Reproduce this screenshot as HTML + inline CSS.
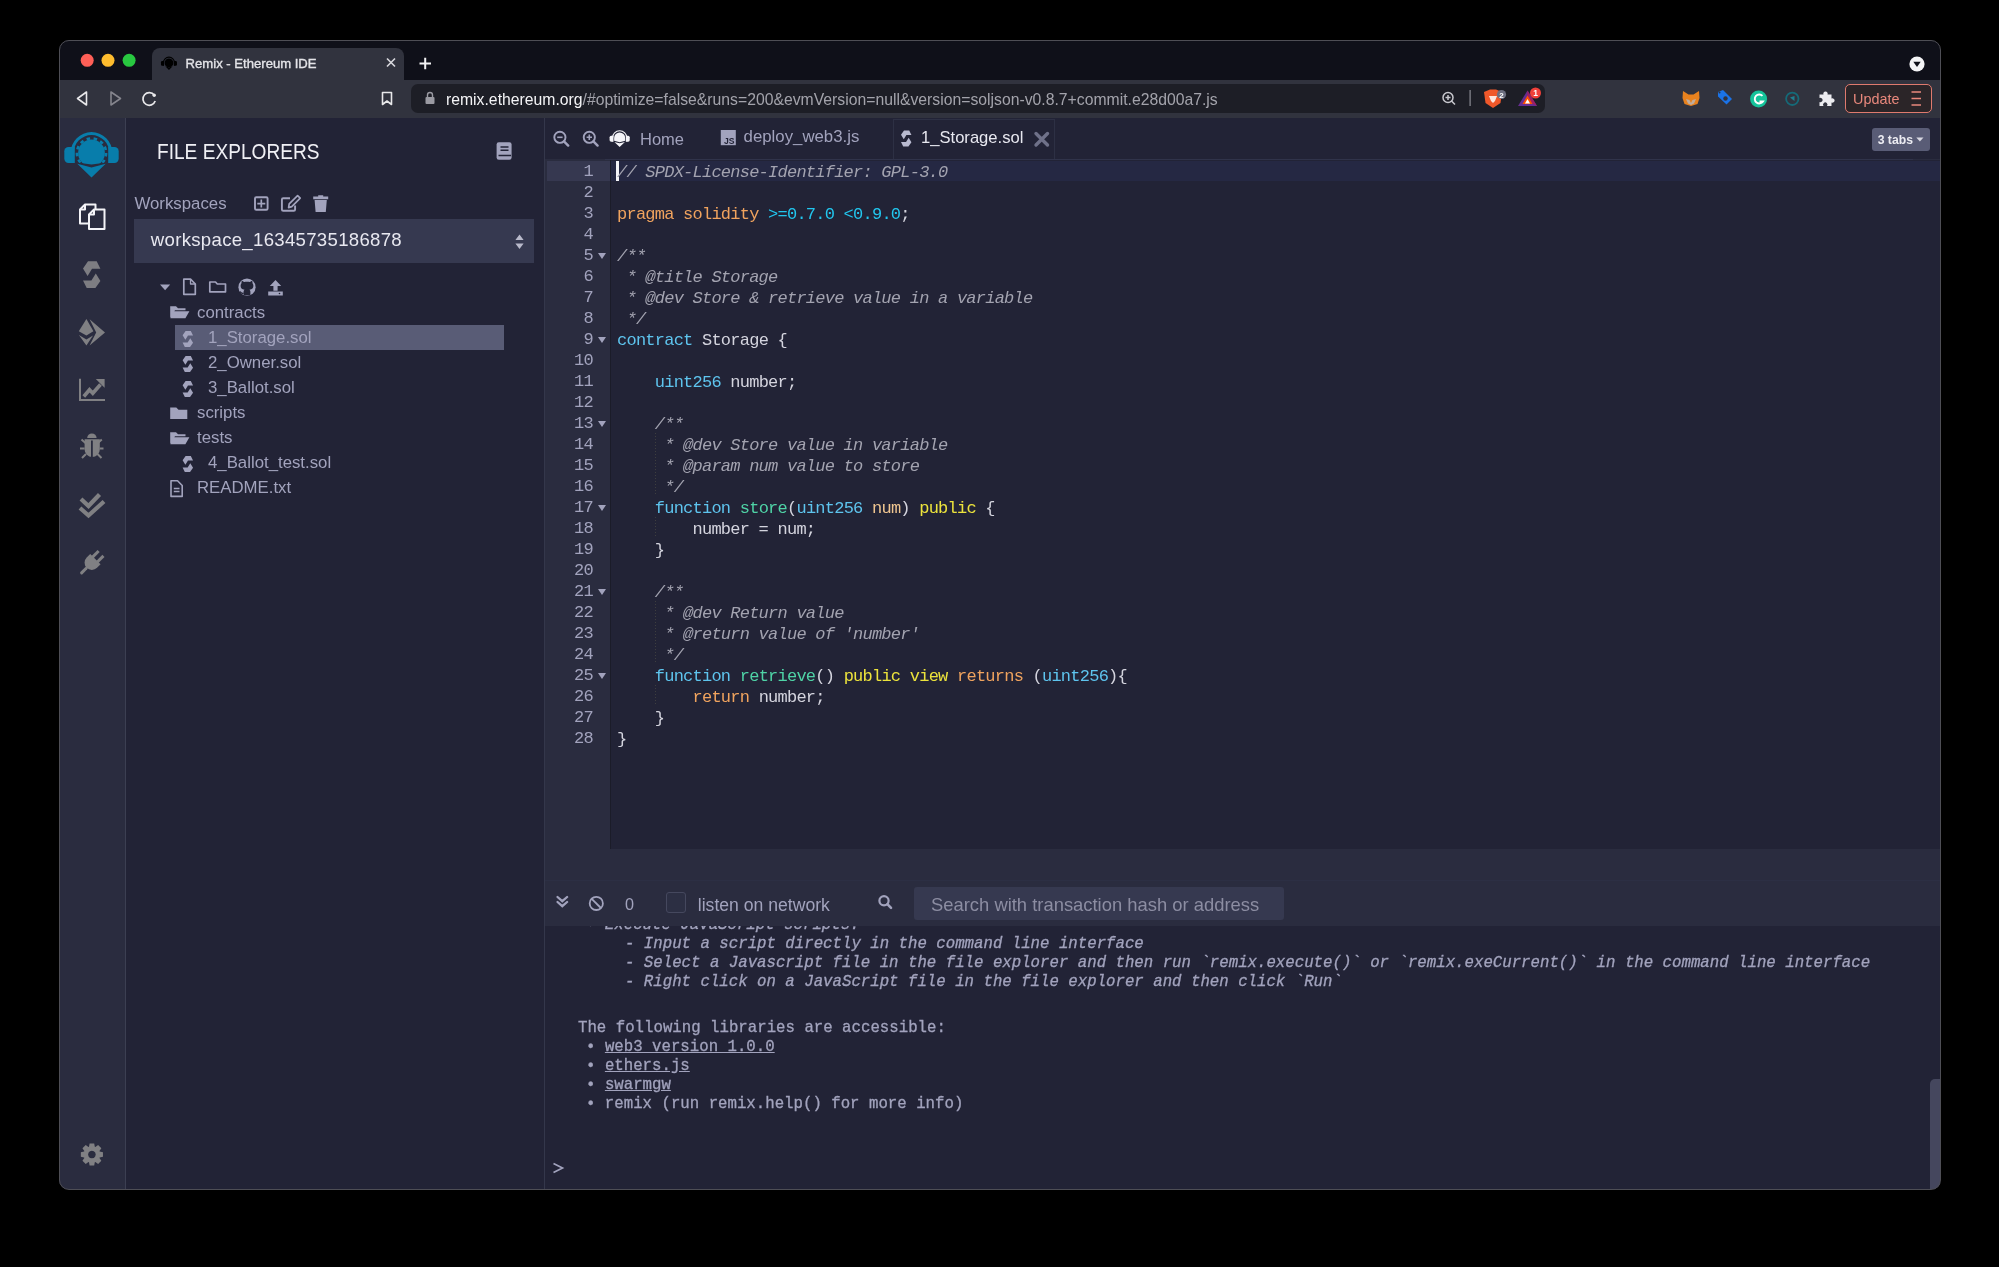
<!DOCTYPE html>
<html><head><meta charset="utf-8">
<style>
html,body{margin:0;padding:0;background:#000;width:1999px;height:1267px;overflow:hidden;}
*{box-sizing:border-box;}
body{font-family:"Liberation Sans",sans-serif;position:relative;}
.a{position:absolute;white-space:pre;}
#win{position:absolute;left:59px;top:40px;width:1882px;height:1150px;border-radius:10px;overflow:hidden;background:#222336;}
#winb{position:absolute;left:59px;top:40px;width:1882px;height:1150px;border-radius:10px;border:1px solid #4e4e55;}
.bk{position:absolute;}
.code{position:absolute;left:617px;white-space:pre;font-family:"Liberation Mono",monospace;font-size:17px;letter-spacing:-0.76px;line-height:21px;height:21px;color:#d4d4de;}
.ln{position:absolute;left:545px;width:48px;text-align:right;font-family:"Liberation Mono",monospace;font-size:17px;letter-spacing:-0.76px;line-height:21px;color:#a2a3bd;}
.fold{position:absolute;left:598px;width:0;height:0;border-left:4px solid transparent;border-right:4px solid transparent;border-top:6px solid #a2a3bd;}
.cm{color:#a3a3b0;font-style:italic;}
.kb{color:#5ec4ee;}
.ko{color:#f0a35e;}
.kc{color:#22c6ee;}
.kg{color:#4fd3a6;}
.ky{color:#ece33c;}
.kp{color:#efc590;}
.tree{position:absolute;font-size:16.6px;color:#a2a3bd;white-space:pre;line-height:20px;}
.term{position:absolute;left:0;white-space:pre;font-family:"Liberation Mono",monospace;font-size:15.73px;line-height:19px;height:19px;color:#a2a3bd;-webkit-text-stroke:0.3px #a2a3bd;margin-top:-0.8px;}
.ti{font-style:italic;}
.u{text-decoration:underline;}
svg{position:absolute;left:0;top:0;}
#app{will-change:transform;}
</style></head><body>
<div id="app" style="position:absolute;left:0;top:0;width:1999px;height:1267px;clip-path:inset(40px 58px 77px 59px round 10px);">
<div class="bk" style="left:59px;top:40px;width:1881px;height:40px;background:#0f1019"></div>
<div class="bk" style="left:152px;top:48px;width:252px;height:32px;background:#31333e;border-radius:8px 8px 0 0"></div>
<div class="bk" style="left:59px;top:80px;width:1881px;height:38px;background:#31333e"></div>
<div class="bk" style="left:411px;top:84px;width:1134px;height:29px;background:#1d1e26;border-radius:7px"></div>
<div class="bk" style="left:1845px;top:84px;width:87px;height:29px;border:1.5px solid #df7a6e;border-radius:5px;background:#2b2528"></div>
<div class="bk" style="left:59px;top:118px;width:66px;height:1071px;background:#2a2c3f"></div>
<div class="bk" style="left:125px;top:118px;width:1px;height:1071px;background:#3c3f52"></div>
<div class="bk" style="left:126px;top:118px;width:418px;height:1071px;background:#222336"></div>
<div class="bk" style="left:544px;top:118px;width:1px;height:1071px;background:#34374b"></div>
<div class="bk" style="left:545px;top:118px;width:1395px;height:1071px;background:#2a2c3f"></div>
<div class="bk" style="left:545px;top:118px;width:1395px;height:41px;background:#222336"></div>
<div class="bk" style="left:893px;top:119px;width:162px;height:41px;border:1px solid #2d3044;border-bottom:none"></div>
<div class="bk" style="left:610px;top:160px;width:1330px;height:689px;background:#222336;border-left:1px solid #1b1c29"></div>
<div class="bk" style="left:605px;top:159px;width:1308px;height:1px;background:#30334a"></div>
<div class="bk" style="left:547px;top:161px;width:63px;height:20px;background:#363850"></div>
<div class="bk" style="left:611px;top:161px;width:1329px;height:20px;background:#252843"></div>
<div class="bk" style="left:616px;top:161px;width:3px;height:20px;background:#f4f4f8"></div>
<div class="bk" style="left:545px;top:880px;width:1395px;height:1px;background:#2c2f44"></div>
<div class="bk" style="left:545px;top:926px;width:1395px;height:263px;background:#222336"></div>
<div class="bk" style="left:1930px;top:1079px;width:10px;height:110px;background:#45475e;border-radius:5px 0 0 0"></div>
<div class="bk" style="left:134px;top:219px;width:400px;height:44px;background:#363950"></div>
<div class="bk" style="left:175px;top:325px;width:329px;height:25px;background:#595c76"></div>
<div class="bk" style="left:914px;top:887px;width:370px;height:33px;background:#363950;border-radius:3px"></div>
<div class="bk" style="left:666px;top:892px;width:20px;height:21px;border:1px solid #45485e;border-radius:3px;background:#2c2f43"></div>
<div class="bk" style="left:1872px;top:128px;width:58px;height:23px;background:#595c76;border-radius:3px"></div>
<div class="a" style="left:185.6px;top:56.26px;font-family:'Liberation Sans',sans-serif;font-size:13.1px;line-height:16px;color:#e4e4e8;font-weight:normal;-webkit-text-stroke:0.35px #e4e4e8;">Remix - Ethereum IDE</div>
<div class="a" style="left:446px;top:89.54px;font-family:'Liberation Sans',sans-serif;font-size:15.76px;line-height:19px;color:#a3a3ab;font-weight:normal;"><span style="color:#f4f4f6">remix.ethereum.org</span>/#optimize=false&amp;runs=200&amp;evmVersion=null&amp;version=soljson-v0.8.7+commit.e28d00a7.js</div>
<div class="a" style="left:1853px;top:90.81px;font-family:'Liberation Sans',sans-serif;font-size:14.4px;line-height:17px;color:#e9887c;font-weight:normal;">Update</div>
<div class="a" style="left:157px;top:138.62px;font-family:'Liberation Sans',sans-serif;font-size:21.6px;line-height:26px;color:#f0f0f5;font-weight:normal;transform:scaleX(0.885);transform-origin:0 0;">FILE EXPLORERS</div>
<div class="a" style="left:134.5px;top:194.08px;font-family:'Liberation Sans',sans-serif;font-size:16.8px;line-height:20px;color:#a2a3bd;font-weight:normal;">Workspaces</div>
<div class="a" style="left:150.8px;top:229.46px;font-family:'Liberation Sans',sans-serif;font-size:18.6px;line-height:22px;color:#e8e8f0;font-weight:normal;letter-spacing:0.3px;">workspace_16345735186878</div>
<div class="a" style="left:197px;top:303.18px;font-family:'Liberation Sans',sans-serif;font-size:16.8px;line-height:20px;color:#a2a3bd;font-weight:normal;">contracts</div>
<div class="a" style="left:208px;top:328.48px;font-family:'Liberation Sans',sans-serif;font-size:16.8px;line-height:20px;color:#a2a3bd;font-weight:normal;">1_Storage.sol</div>
<div class="a" style="left:208px;top:353.48px;font-family:'Liberation Sans',sans-serif;font-size:16.8px;line-height:20px;color:#a2a3bd;font-weight:normal;">2_Owner.sol</div>
<div class="a" style="left:208px;top:378.48px;font-family:'Liberation Sans',sans-serif;font-size:16.8px;line-height:20px;color:#a2a3bd;font-weight:normal;">3_Ballot.sol</div>
<div class="a" style="left:197px;top:403.48px;font-family:'Liberation Sans',sans-serif;font-size:16.8px;line-height:20px;color:#a2a3bd;font-weight:normal;">scripts</div>
<div class="a" style="left:197px;top:428.48px;font-family:'Liberation Sans',sans-serif;font-size:16.8px;line-height:20px;color:#a2a3bd;font-weight:normal;">tests</div>
<div class="a" style="left:208px;top:453.48px;font-family:'Liberation Sans',sans-serif;font-size:16.8px;line-height:20px;color:#a2a3bd;font-weight:normal;">4_Ballot_test.sol</div>
<div class="a" style="left:197px;top:478.48px;font-family:'Liberation Sans',sans-serif;font-size:16.8px;line-height:20px;color:#a2a3bd;font-weight:normal;">README.txt</div>
<div class="a" style="left:640px;top:129.28px;font-family:'Liberation Sans',sans-serif;font-size:16.5px;line-height:20px;color:#a2a3bd;font-weight:normal;">Home</div>
<div class="a" style="left:743.6px;top:127.48px;font-family:'Liberation Sans',sans-serif;font-size:16.8px;line-height:20px;color:#a2a3bd;font-weight:normal;">deploy_web3.js</div>
<div class="a" style="left:921px;top:127.75px;font-family:'Liberation Sans',sans-serif;font-size:16.6px;line-height:20px;color:#e8e8f0;font-weight:normal;">1_Storage.sol</div>
<div class="a" style="left:1877.7px;top:132.57px;font-family:'Liberation Sans',sans-serif;font-size:12.2px;line-height:15px;color:#ececf2;font-weight:bold;">3 tabs</div>
<div class="a" style="left:625px;top:894.69px;font-family:'Liberation Sans',sans-serif;font-size:16.2px;line-height:19px;color:#a2a3bd;font-weight:normal;">0</div>
<div class="a" style="left:697.8px;top:894.70px;font-family:'Liberation Sans',sans-serif;font-size:17.6px;line-height:21px;color:#a2a3bd;font-weight:normal;">listen on network</div>
<div class="a" style="left:931px;top:893.62px;font-family:'Liberation Sans',sans-serif;font-size:18.4px;line-height:22px;color:#8c8da2;font-weight:normal;">Search with transaction hash or address</div>
<div class="ln" style="top:161px">1</div>
<div class="code" style="top:162px"><span class="cm">// SPDX-License-Identifier: GPL-3.0</span></div>
<div class="ln" style="top:182px">2</div>
<div class="ln" style="top:203px">3</div>
<div class="code" style="top:204px"><span class="ko">pragma solidity </span><span class="kc">&gt;=0.7.0 &lt;0.9.0</span>;</div>
<div class="ln" style="top:224px">4</div>
<div class="ln" style="top:245px">5</div>
<div class="fold" style="top:253px"></div>
<div class="code" style="top:246px"><span class="cm">/**</span></div>
<div class="ln" style="top:266px">6</div>
<div class="code" style="top:267px"><span class="cm"> * @title Storage</span></div>
<div class="ln" style="top:287px">7</div>
<div class="code" style="top:288px"><span class="cm"> * @dev Store &amp; retrieve value in a variable</span></div>
<div class="ln" style="top:308px">8</div>
<div class="code" style="top:309px"><span class="cm"> */</span></div>
<div class="ln" style="top:329px">9</div>
<div class="fold" style="top:337px"></div>
<div class="code" style="top:330px"><span class="kb">contract</span> Storage {</div>
<div class="ln" style="top:350px">10</div>
<div class="ln" style="top:371px">11</div>
<div class="code" style="top:372px">    <span class="kb">uint256</span> number;</div>
<div class="ln" style="top:392px">12</div>
<div class="ln" style="top:413px">13</div>
<div class="fold" style="top:421px"></div>
<div class="code" style="top:414px"><span class="cm">    /**</span></div>
<div class="ln" style="top:434px">14</div>
<div class="code" style="top:435px"><span class="cm">     * @dev Store value in variable</span></div>
<div class="ln" style="top:455px">15</div>
<div class="code" style="top:456px"><span class="cm">     * @param num value to store</span></div>
<div class="ln" style="top:476px">16</div>
<div class="code" style="top:477px"><span class="cm">     */</span></div>
<div class="ln" style="top:497px">17</div>
<div class="fold" style="top:505px"></div>
<div class="code" style="top:498px">    <span class="kb">function</span> <span class="kg">store</span>(<span class="kb">uint256</span> <span class="kp">num</span>) <span class="ky">public</span> {</div>
<div class="ln" style="top:518px">18</div>
<div class="code" style="top:519px">        number = num;</div>
<div class="ln" style="top:539px">19</div>
<div class="code" style="top:540px">    }</div>
<div class="ln" style="top:560px">20</div>
<div class="ln" style="top:581px">21</div>
<div class="fold" style="top:589px"></div>
<div class="code" style="top:582px"><span class="cm">    /**</span></div>
<div class="ln" style="top:602px">22</div>
<div class="code" style="top:603px"><span class="cm">     * @dev Return value</span></div>
<div class="ln" style="top:623px">23</div>
<div class="code" style="top:624px"><span class="cm">     * @return value of &#x27;number&#x27;</span></div>
<div class="ln" style="top:644px">24</div>
<div class="code" style="top:645px"><span class="cm">     */</span></div>
<div class="ln" style="top:665px">25</div>
<div class="fold" style="top:673px"></div>
<div class="code" style="top:666px">    <span class="kb">function</span> <span class="kg">retrieve</span>() <span class="ky">public</span> <span class="ky">view</span> <span class="ko">returns</span> (<span class="kb">uint256</span>){</div>
<div class="ln" style="top:686px">26</div>
<div class="code" style="top:687px">        <span class="ko">return</span> number;</div>
<div class="ln" style="top:707px">27</div>
<div class="code" style="top:708px">    }</div>
<div class="ln" style="top:728px">28</div>
<div class="code" style="top:729px">}</div>

<div style="position:absolute;left:0;top:926px;width:1940px;height:263px;overflow:hidden">
<div class="term" style="left:586px;top:-8.99px"><span class="ti">• Execute JavaScript scripts:</span></div>
<div class="term" style="left:625px;top:10.01px"><span class="ti">- Input a script directly in the command line interface</span></div>
<div class="term" style="left:625px;top:29.01px"><span class="ti">- Select a Javascript file in the file explorer and then run `remix.execute()` or `remix.exeCurrent()` in the command line interface</span></div>
<div class="term" style="left:625px;top:48.01px"><span class="ti">- Right click on a JavaScript file in the file explorer and then click `Run`</span></div>
<div class="term" style="left:578px;top:94.01px">The following libraries are accessible:</div>
<div class="term" style="left:586px;top:113.01px">• <span class="u">web3 version 1.0.0</span></div>
<div class="term" style="left:586px;top:132.01px">• <span class="u">ethers.js</span></div>
<div class="term" style="left:586px;top:151.01px">• <span class="u">swarmgw</span></div>
<div class="term" style="left:586px;top:170.01px">• remix (run remix.help() for more info)</div>
</div>
<svg width="1999" height="1267" viewBox="0 0 1999 1267">
<!-- traffic lights -->
<circle cx="87.2" cy="60.3" r="6.5" fill="#fe5f57"/>
<circle cx="108" cy="60.3" r="6.5" fill="#febc2e"/>
<circle cx="129.1" cy="60.3" r="6.5" fill="#28c840"/>
<!-- tab favicon -->
<g transform="translate(159.7,54.5) scale(0.294)" fill="#000">
 <path d="M10.6 37.8 V28 A20.9 20.9 0 0 1 52.4 28 V37.8 H48.4 V28 A16.9 16.9 0 0 0 14.6 28 V37.8 Z"/>
 <path d="M14.8 22 H8.5 A4.2 4.2 0 0 0 4.3 26.2 V33.8 A4.2 4.2 0 0 0 8.5 38 H14.8 Z"/>
 <path d="M48.2 22 H54.5 A4.2 4.2 0 0 1 58.7 26.2 V33.8 A4.2 4.2 0 0 1 54.5 38 H48.2 Z"/>
 <path d="M19 40 L31.5 44 L44 40 L31.5 52.4 Z"/>
 <circle cx="31.5" cy="28.5" r="15"/>
</g>
<path d="M387 58.5 L395 66.5 M395 58.5 L387 66.5" stroke="#d9d9de" stroke-width="1.6"/>
<path d="M419.5 63.5 H431 M425.2 57.8 V69.2" stroke="#f2f2f4" stroke-width="2"/>
<circle cx="1917" cy="64" r="7.6" fill="#f4f4f6"/>
<path d="M1913.3 61.8 H1920.7 L1917 67 Z" fill="#0f1019"/>
<!-- nav -->
<path d="M86.5 92 V105 L77.5 98.5 Z" fill="none" stroke="#e8e8ea" stroke-width="1.6" stroke-linejoin="round"/>
<path d="M111 92 V105 L120.5 98.5 Z" fill="none" stroke="#85858d" stroke-width="1.6" stroke-linejoin="round"/>
<path d="M154.3 95.2 A6.3 6.3 0 1 0 155.2 101" fill="none" stroke="#e8e8ea" stroke-width="1.7"/>
<circle cx="154.2" cy="95.2" r="1.7" fill="#e8e8ea"/>
<path d="M382.5 92.5 H391.5 V104.5 L387 101 L382.5 104.5 Z" fill="none" stroke="#e8e8ea" stroke-width="1.6" stroke-linejoin="round"/>
<rect x="425.5" y="97" width="9" height="7" rx="1" fill="#9a9aa2"/>
<path d="M427.5 97 V95 A2.5 2.5 0 0 1 432.5 95 V97" fill="none" stroke="#9a9aa2" stroke-width="1.4"/>
<circle cx="1448" cy="97.5" r="5" fill="none" stroke="#c8c8ce" stroke-width="1.5"/>
<path d="M1451.5 101 L1455 104.5 M1445.5 97.5 H1450.5 M1448 95 V100" stroke="#c8c8ce" stroke-width="1.5"/>
<rect x="1469.5" y="90" width="1.2" height="16" fill="#8c8c94"/>
<path d="M1484 92 L1490 89.5 H1496 L1502 92 L1500.5 103 L1493 108 L1485.5 103 Z" fill="#f0582a"/>
<path d="M1489 96 H1497 L1495 101 L1493 103 L1491 101 Z" fill="#ffffff" opacity="0.85"/>
<circle cx="1501.5" cy="94.5" r="4.6" fill="#6d6f80"/>
<text x="1501.5" y="97.5" font-family="Liberation Sans" font-size="8" font-weight="bold" fill="#fff" text-anchor="middle">2</text>
<path d="M1527.5 90.5 L1537 106 H1518 Z" fill="#662d91"/>
<path d="M1527.5 90.5 L1537 106 L1527.5 101 Z" fill="#9e1f63"/>
<path d="M1527.5 95.5 L1532.5 104 H1522.5 Z" fill="#ff5000"/>
<path d="M1527.5 99 L1530 103.5 H1525 Z" fill="#fff"/>
<circle cx="1535.5" cy="93" r="5.5" fill="#f0403a"/>
<text x="1535.5" y="96.3" font-family="Liberation Sans" font-size="8.5" font-weight="bold" fill="#fff" text-anchor="middle">1</text>
<!-- extensions -->
<path d="M1683 91 L1688.5 94.5 H1693.5 L1699 91 L1699.5 98 L1697.5 104 L1691 106 L1684.5 104 L1682.5 98 Z" fill="#e8821e"/>
<path d="M1686 99 L1689.5 100 L1691 103 L1692.5 100 L1696 99 L1694 103.5 L1691 105 L1688 103.5 Z" fill="#c0ad9e"/>
<path d="M1718 92 L1723 90 L1732 99 L1726.5 104.5 L1718 96.5 Z" fill="#1a73e8"/>
<circle cx="1725.5" cy="98.5" r="2.2" fill="#31333e"/>
<circle cx="1719.5" cy="92.5" r="1" fill="#31333e"/>
<circle cx="1758.6" cy="99" r="8.5" fill="#15c39a"/>
<path d="M1762.5 95.8 A4.5 4.5 0 1 0 1763 101.5 H1759.5" fill="none" stroke="#fff" stroke-width="1.9"/>
<circle cx="1792.3" cy="98.8" r="6.2" fill="none" stroke="#156a78" stroke-width="1.8"/>
<path d="M1790 97.5 L1794.5 96 V101 Z" fill="#17a1b3" opacity="0.7"/>
<path d="M1819.5 94.5 H1823.5 A2.2 2.2 0 1 1 1827.5 94.5 H1831.5 V98.5 A2.2 2.2 0 1 1 1831.5 102.5 V106 H1827 A2.2 2.2 0 1 0 1823.5 106 H1819.5 V102 A2.2 2.2 0 1 0 1819.5 98 Z" fill="#ececf0"/>
<path d="M1911.5 92 H1921 M1911.5 98.5 H1921 M1911.5 105 H1921" stroke="#e9887c" stroke-width="1.7"/>
<!-- remix logo -->
<defs><clipPath id="shc"><path d="M0 0 H64 V35.3 L31.5 39.4 L0 35.3 Z"/></clipPath></defs>
<g transform="translate(60,125)" fill="#087dab">
 <path d="M10.6 37.8 V28 A20.9 20.9 0 0 1 52.4 28 V37.8 H49.4 V28 A17.9 17.9 0 0 0 13.6 28 V37.8 Z"/>
 <path d="M14.8 22 H8.5 A4.2 4.2 0 0 0 4.3 26.2 V33.8 A4.2 4.2 0 0 0 8.5 38 H14.8 Z"/>
 <path d="M48.2 22 H54.5 A4.2 4.2 0 0 1 58.7 26.2 V33.8 A4.2 4.2 0 0 1 54.5 38 H48.2 Z"/>
 <path d="M17.3 38.7 L31.5 42.6 L45.7 38.7 L31.5 52.4 Z"/>
 <g clip-path="url(#shc)">
  <circle cx="31.5" cy="28" r="13.4"/>
  <circle cx="31.5" cy="28" r="14.6" fill="none" stroke="#087dab" stroke-width="2.6" stroke-dasharray="3.5 3.55"/>
 </g>
</g>
<!-- side icons -->
<g fill="none" stroke="#f4f4f8" stroke-width="2" stroke-linejoin="round">
 <path d="M88.5 223.5 H80 V209.5 L85 204.5 H95.5 V210"/>
 <path d="M80 209.5 H85 V204.5"/>
 <path d="M89 214.5 L94 209.5 H104.5 V229 H89 Z"/>
 <path d="M89 214.5 H94 V209.5"/>
</g>
<path transform="translate(83,261.3)" d="M5 0 L13.7 0 L17.4 7.5 L9 7.5 L4.6 14.6 L0 7.2 Z M12.4 26.8 L3.7 26.8 L0 19.3 L8.4 19.3 L12.8 12.2 L17.4 19.6 Z" fill="#7d7d82"/>
<g transform="translate(72,310)" fill="#808083">
 <path d="M14.4 9 L21.4 21.2 L14.4 25.6 L6.8 21.2 Z"/>
 <path d="M6.9 25 L14.4 29.6 L21 25.4 L14.4 35.6 Z"/>
 <path d="M17.6 9.3 L33 22.6 L17.6 35.4 L24.2 22.4 Z"/>
</g>
<g stroke="#808083" fill="none">
 <path d="M80 378.7 V400 H105" stroke-width="2"/>
 <path d="M83.8 396.5 L89.5 389.8 L92.8 393.3 L100.5 384.5" stroke-width="3.6"/>
</g>
<path d="M95.8 379 H104.6 V387.8 Z" fill="#808083"/>
<g fill="#808083">
 <path d="M87.2 438 A4.7 4.6 0 0 1 96.6 438 Z"/>
 <path d="M84.6 439.3 H99.8 V449.5 A7.6 7.4 0 0 1 84.6 449.5 Z"/>
</g>
<rect x="91" y="440.5" width="1.8" height="16.5" fill="#2a2c3f"/>
<path d="M80 448.5 H84.6 M99.8 448.5 H103.5 M81.5 439.5 L85.5 443 M101.8 439.5 L97.8 443 M82 458 L86 454 M101.5 458 L97.5 454" stroke="#808083" stroke-width="2"/>
<path d="M81 499 L88.5 506 L99.5 494.5 M80 508 L88.5 515.5 L104 501.5" fill="none" stroke="#808083" stroke-width="4.2"/>
<g transform="rotate(45 91.5 563)" fill="#808083">
 <path d="M84.2 557.5 H98.8 V562.5 A7.3 7.3 0 0 1 84.2 562.5 Z"/>
 <rect x="86.6" y="549.5" width="3" height="9"/><rect x="93.4" y="549.5" width="3" height="9"/>
 <rect x="90" y="569" width="3" height="9.5" rx="1.5"/>
</g>
<path d="M89.00 1146.72 L89.60 1143.44 L94.20 1143.44 L94.80 1146.72 L95.35 1146.95 L98.10 1145.05 L101.35 1148.30 L99.45 1151.05 L99.68 1151.60 L102.96 1152.20 L102.96 1156.80 L99.68 1157.40 L99.45 1157.95 L101.35 1160.70 L98.10 1163.95 L95.35 1162.05 L94.80 1162.28 L94.20 1165.56 L89.60 1165.56 L89.00 1162.28 L88.45 1162.05 L85.70 1163.95 L82.45 1160.70 L84.35 1157.95 L84.12 1157.40 L80.84 1156.80 L80.84 1152.20 L84.12 1151.60 L84.35 1151.05 L82.45 1148.30 L85.70 1145.05 L88.45 1146.95 Z M91.9 1150.7 A3.8 3.8 0 1 0 91.91 1150.7 Z" fill="#808083" fill-rule="evenodd"/>
<!-- side panel icons -->
<g fill="none" stroke="#a2a3bd" stroke-width="1.9">
 <rect x="255" y="197.2" width="12.6" height="12.6" rx="1.3"/>
 <path d="M257.3 203.6 H265.3 M261.3 199.6 V207.6" stroke-width="1.7"/>
 <path d="M290 198.2 H283.2 A1.3 1.3 0 0 0 281.9 199.5 V209.5 A1.3 1.3 0 0 0 283.2 210.8 H293.8 A1.3 1.3 0 0 0 295.1 209.5 V205.5"/>
 <path d="M288.6 207.6 L289.2 203.8 L297.6 195.6 L300.2 198.2 L291.8 206.6 Z" stroke-width="1.7" stroke-linejoin="round"/>
</g>
<path d="M313.2 196.5 H318.2 V195.2 H323.2 V196.5 H328.2 V199.2 H313.2 Z M314.6 200 H326.8 L325.8 212 H315.6 Z" fill="#a2a3bd"/>
<rect x="496.6" y="142.2" width="15" height="17.5" rx="2.2" fill="#a2a3bd"/>
<path d="M500.5 147 H508.5 M500.5 150.2 H508.5 M498.5 155.5 H511" stroke="#222336" stroke-width="1.4"/>
<path d="M515.4 240 H523.6 L519.5 234.5 Z M515.4 243.6 H523.6 L519.5 249 Z" fill="#b9bacb"/>
<path d="M160 284.6 H170.2 L165.1 290.2 Z" fill="#a2a3bd"/>
<g fill="none" stroke="#a2a3bd" stroke-width="1.7" stroke-linejoin="round">
 <path d="M183.8 279.2 H190.5 L195.3 284 V294.3 H183.8 Z"/>
 <path d="M190.5 279.2 V284 H195.3" stroke-width="1.3"/>
 <path d="M209.8 282 H215.5 L217.3 284 H225.5 V291.8 H209.8 Z"/>
</g>
<circle cx="247" cy="287.2" r="8.6" fill="#a2a3bd"/>
<path d="M243.6 295.2 V291.8 C243.6 290.6 244.2 290 244.6 289.7 C241.7 289.3 240.6 287.8 240.6 285.7 C240.6 284.6 241 283.8 241.6 283.1 C241.4 282.5 241.4 281.7 241.8 280.9 C242.8 280.9 243.7 281.6 244.2 282 C245.9 281.5 248.1 281.5 249.8 282 C250.3 281.6 251.2 280.9 252.2 280.9 C252.6 281.7 252.6 282.5 252.4 283.1 C253 283.8 253.4 284.6 253.4 285.7 C253.4 287.8 252.3 289.3 249.4 289.7 C249.8 290 250.4 290.6 250.4 291.8 V295.2 Z" fill="#222336"/>
<path d="M243.6 293.2 C241.5 293.8 240.5 292.5 240 291.5" fill="none" stroke="#222336" stroke-width="1.3"/>
<path d="M275.5 280 L281.2 286 H277.6 V290.8 H273.4 V286 H269.8 Z M268.2 291.5 H282.8 V295.4 H268.2 Z" fill="#a2a3bd"/>
<circle cx="279.5" cy="293.5" r="0.8" fill="#222336"/>
<!-- folders -->
<path d="M170.2 306.2 H176 L178 308.2 H185.5 V310.2 H175 L170.2 317.8 Z M172.6 311.2 H189.4 L185.4 318.2 H170.4 Z" fill="#a2a3bd"/>
<path d="M170.2 432.2 H176 L178 434.2 H185.5 V436.2 H175 L170.2 443.8 Z M172.6 437.2 H189.4 L185.4 444.2 H170.4 Z" fill="#a2a3bd"/>
<path d="M170.2 407.5 H176.3 L178.5 409.8 H187.3 V419 H170.2 Z" fill="#a2a3bd"/>
<g fill="none" stroke="#a2a3bd" stroke-width="1.6" stroke-linejoin="round">
 <path d="M171 480.8 H177.5 L182.2 485.5 V496.4 H171 Z"/>
 <path d="M173.8 488.5 H179.5 M173.8 491.5 H179.5" stroke-width="1.4"/>
</g>
<path transform="translate(182.6,331.0) scale(0.6)" d="M5 0 L13.7 0 L17.4 7.5 L9 7.5 L4.6 14.6 L0 7.2 Z M12.4 26.8 L3.7 26.8 L0 19.3 L8.4 19.3 L12.8 12.2 L17.4 19.6 Z" fill="#a2a3bd"/>
<path transform="translate(182.6,356.0) scale(0.6)" d="M5 0 L13.7 0 L17.4 7.5 L9 7.5 L4.6 14.6 L0 7.2 Z M12.4 26.8 L3.7 26.8 L0 19.3 L8.4 19.3 L12.8 12.2 L17.4 19.6 Z" fill="#a2a3bd"/>
<path transform="translate(182.6,381.0) scale(0.6)" d="M5 0 L13.7 0 L17.4 7.5 L9 7.5 L4.6 14.6 L0 7.2 Z M12.4 26.8 L3.7 26.8 L0 19.3 L8.4 19.3 L12.8 12.2 L17.4 19.6 Z" fill="#a2a3bd"/>
<path transform="translate(182.6,456.0) scale(0.6)" d="M5 0 L13.7 0 L17.4 7.5 L9 7.5 L4.6 14.6 L0 7.2 Z M12.4 26.8 L3.7 26.8 L0 19.3 L8.4 19.3 L12.8 12.2 L17.4 19.6 Z" fill="#a2a3bd"/>
<path transform="translate(901,130.5) scale(0.6)" d="M5 0 L13.7 0 L17.4 7.5 L9 7.5 L4.6 14.6 L0 7.2 Z M12.4 26.8 L3.7 26.8 L0 19.3 L8.4 19.3 L12.8 12.2 L17.4 19.6 Z" fill="#b9bad0"/>
<path d="M655.5 433 V496" stroke="#4a4a44" stroke-width="1" stroke-dasharray="1 2" opacity="0.7"/>
<path d="M655.5 517 V538" stroke="#4a4a44" stroke-width="1" stroke-dasharray="1 2" opacity="0.7"/>
<path d="M655.5 601 V664" stroke="#4a4a44" stroke-width="1" stroke-dasharray="1 2" opacity="0.7"/>
<path d="M655.5 685 V706" stroke="#4a4a44" stroke-width="1" stroke-dasharray="1 2" opacity="0.7"/>
<!-- tab bar icons -->
<g fill="none" stroke="#a2a3bd" stroke-width="1.9">
 <circle cx="559.9" cy="137.3" r="5.6"/><path d="M564 141.4 L568.2 145.6" stroke-width="2.4" stroke-linecap="round"/><path d="M557.2 137.3 H562.6" stroke-width="1.6"/>
 <circle cx="589.3" cy="137.3" r="5.6"/><path d="M593.4 141.4 L597.6 145.6" stroke-width="2.4" stroke-linecap="round"/><path d="M586.6 137.3 H592 M589.3 134.6 V140" stroke-width="1.6"/>
</g>
<g transform="translate(608,127.6) scale(0.37)" fill="#f4f4f8">
 <path d="M10.6 37.8 V28 A20.9 20.9 0 0 1 52.4 28 V37.8 H49.4 V28 A17.9 17.9 0 0 0 13.6 28 V37.8 Z"/>
 <path d="M14.8 22 H8.5 A4.2 4.2 0 0 0 4.3 26.2 V33.8 A4.2 4.2 0 0 0 8.5 38 H14.8 Z"/>
 <path d="M48.2 22 H54.5 A4.2 4.2 0 0 1 58.7 26.2 V33.8 A4.2 4.2 0 0 1 54.5 38 H48.2 Z"/>
 <path d="M17.3 38.7 L31.5 42.6 L45.7 38.7 L31.5 52.4 Z"/>
 <path d="M16.6 35.4 V28 A14.9 14.9 0 0 1 46.4 28 V35.4 L31.5 39.5 Z"/>
</g>
<rect x="720.8" y="130" width="15" height="15.2" fill="#a2a3bd"/>
<text x="734.6" y="144.2" font-family="Liberation Sans" font-size="8.6" font-weight="bold" fill="#222336" text-anchor="end">JS</text>
<path d="M1036 133.5 L1047.5 145 M1047.5 133.5 L1036 145" stroke="#6f7189" stroke-width="3.4" stroke-linecap="round"/>
<path d="M1916.3 137.6 H1923.5 L1919.9 141.4 Z" fill="#d8d8e2"/>
<!-- terminal bar -->
<path d="M557.5 897 L562.3 901.2 L567.1 897 M557.5 902 L562.3 906.2 L567.1 902" fill="none" stroke="#a2a3bd" stroke-width="2.3" stroke-linecap="round"/>
<circle cx="596.3" cy="903.4" r="6.6" fill="none" stroke="#a2a3bd" stroke-width="1.8"/>
<path d="M591.7 898.8 L600.9 908" stroke="#a2a3bd" stroke-width="1.8"/>
<circle cx="884" cy="900.8" r="4.6" fill="none" stroke="#a2a3bd" stroke-width="2.2"/>
<path d="M887.4 904.2 L891 907.8" stroke="#a2a3bd" stroke-width="2.6" stroke-linecap="round"/>
<path d="M553.5 1163.5 L562.5 1168 L553.5 1172.5" fill="none" stroke="#a2a3bd" stroke-width="1.7"/>
</svg>
</div>
<div id="winb"></div>
</body></html>
